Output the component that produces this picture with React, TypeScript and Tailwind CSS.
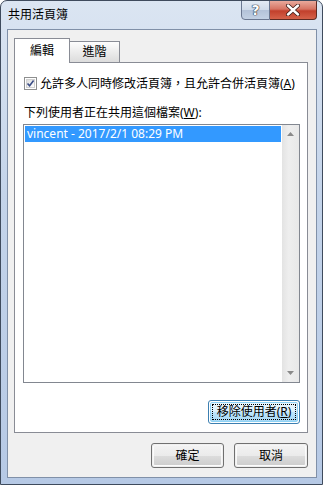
import React from 'react'

const font = "font-['Noto_Sans','Noto_Sans_CJK_TC',sans-serif]"

function Checkbox() {
  return (
    <div className="w-[13px] h-[13px] border border-[#8e8f8f] bg-white p-[1px] shrink-0">
      <div className="w-full h-full border border-[#d0d0d0] bg-[linear-gradient(135deg,#dcdcdc,#ffffff)] relative">
        <svg viewBox="0 0 9 9" className="absolute -left-px -top-px w-[9px] h-[9px]">
          <path d="M1.5 4.5 L3.6 6.8 L7.6 1.6" fill="none" stroke="#3b4d86" strokeWidth="1.6" />
        </svg>
      </div>
    </div>
  )
}

function Button({ label, hotkey, width }: { label: string; hotkey?: string; width: string }) {
  return (
    <button
      className={`${width} h-[25px] rounded-[3px] border border-[#707070] p-px`}
    >
      <div className="h-full w-full rounded-[2px] border border-white/80 bg-[linear-gradient(#f2f2f2_0%,#ebebeb_50%,#dddddd_51%,#cfcfcf_100%)] flex items-center justify-center text-[12px] leading-[14px] text-black">
        {label}
        {hotkey && (
          <span>
            (<span className="underline">{hotkey}</span>)
          </span>
        )}
      </div>
    </button>
  )
}

export default function App() {
  return (
    <div className={`${font} w-[323px] h-[485px] flex flex-col rounded-t-[7px] border border-[#3f4b5d] bg-[linear-gradient(180deg,#dbe5f2_0%,#c4d4ea_40%,#b6c9e5_100%)] overflow-hidden`}>
      {/* Title bar */}
      <div className="h-[28px] flex items-start shrink-0">
        <div className="pl-[7px] pt-[7px] text-[12px] leading-[14px] text-black">共用活頁簿</div>
        <div className="ml-auto mr-[5px] -mt-px flex">
          <div className="w-[29px] h-[20px] rounded-bl-[4px] border border-[#6a7790] bg-[linear-gradient(#e3eaf4_0%,#cfdae9_50%,#b3c2d8_51%,#c3d1e4_100%)] flex items-center justify-center">
            <span className="text-white font-bold text-[14px] leading-none font-['DejaVu_Sans',sans-serif] [text-shadow:0_0_1px_#202838,0_0_1px_#202838,0_0_1px_#202838]">?</span>
          </div>
          <div className="w-[47px] h-[20px] rounded-br-[4px] border border-l-0 border-[#5e2a22] bg-[linear-gradient(#e9a99c_0%,#d67463_45%,#c2402c_55%,#d5624a_100%)] flex items-center justify-center">
            <svg viewBox="0 0 16 12" className="w-[16px] h-[12px]">
              <path d="M3 1.5 L13 10.5 M13 1.5 L3 10.5" stroke="#3b1b16" strokeWidth="4" strokeLinecap="round" />
              <path d="M3 1.5 L13 10.5 M13 1.5 L3 10.5" stroke="#ffffff" strokeWidth="2.4" strokeLinecap="round" />
            </svg>
          </div>
        </div>
      </div>

      {/* Client area */}
      <div className="ml-[6px] mr-[5px] h-[449px] border border-[#8090a8] bg-[#f0f0f0] pt-[8px] pl-[6px] pr-[8px] pb-[9px] flex flex-col text-black">
        {/* Tabs */}
        <div className="h-[24px] flex items-end">
          <div className="relative z-10 -mb-px w-[56px] h-[25px] border border-b-0 border-[#898c95] bg-white flex items-center justify-center text-[12px] leading-[14px]">
            編輯
          </div>
          <div className="w-[50px] h-[21px] border border-l-0 border-b-0 border-[#898c95] bg-[linear-gradient(#fdfdfd_0%,#ececec_50%,#dcdcdc_100%)] flex items-center justify-center text-[12px] leading-[14px]">
            進階
          </div>
        </div>

        {/* Panel */}
        <div className="h-[371px] border border-[#898c95] bg-white pt-[14px] pl-[9px] pr-[7px] pb-[8px] flex flex-col">
          <div className="h-[13px] flex items-center gap-[3px] text-[12px] leading-[14px]">
            <Checkbox />
            <span>
              允許多人同時修改活頁簿，且允許合併活頁簿(<span className="underline">A</span>)
            </span>
          </div>

          <div className="mt-[16px] h-[14px] text-[12px] leading-[14px]">
            下列使用者正在共用這個檔案(<span className="underline">W</span>):
          </div>

          <div className="mt-[4px] -ml-px h-[259px] border border-[#828790] flex">
            <div className="flex-1 p-px">
              <div className="h-[16px] bg-[#3399ff] text-white text-[12px] leading-[16px] pl-[2px]">
                vincent - 2017/2/1 08:29 PM
              </div>
            </div>
            <div className="w-[17px] bg-[linear-gradient(90deg,#e3e3e3,#eeeeee_40%,#e8e8e8)] flex flex-col items-center justify-between py-[7px]">
              <svg viewBox="0 0 7 4" className="w-[7px] h-[4px]">
                <path d="M0 4 L3.5 0 L7 4 Z" fill="#8a8a8a" />
              </svg>
              <svg viewBox="0 0 7 4" className="w-[7px] h-[4px]">
                <path d="M0 0 L3.5 4 L7 0 Z" fill="#8a8a8a" />
              </svg>
            </div>
          </div>

          <div className="mt-[17px] flex justify-end">
            <button className="w-[92px] h-[24px] rounded-[3px] border border-[#3c7fb1] p-px">
              <div className="h-full w-full rounded-[2px] border border-[#8fd3f5] bg-[linear-gradient(#eaf6fd_0%,#d9f0fc_50%,#bee6fd_51%,#a7d9f5_100%)] p-px">
                <div className="h-full w-full border border-dotted border-black flex items-center justify-center text-[12px] leading-[14px] text-black">
                  移除使用者(<span className="underline">R</span>)
                </div>
              </div>
            </button>
          </div>
        </div>

        {/* Bottom buttons */}
        <div className="mt-[10px] flex justify-end gap-[10px]">
          <Button label="確定" width="w-[73px]" />
          <Button label="取消" width="w-[74px]" />
        </div>
      </div>
    </div>
  )
}
